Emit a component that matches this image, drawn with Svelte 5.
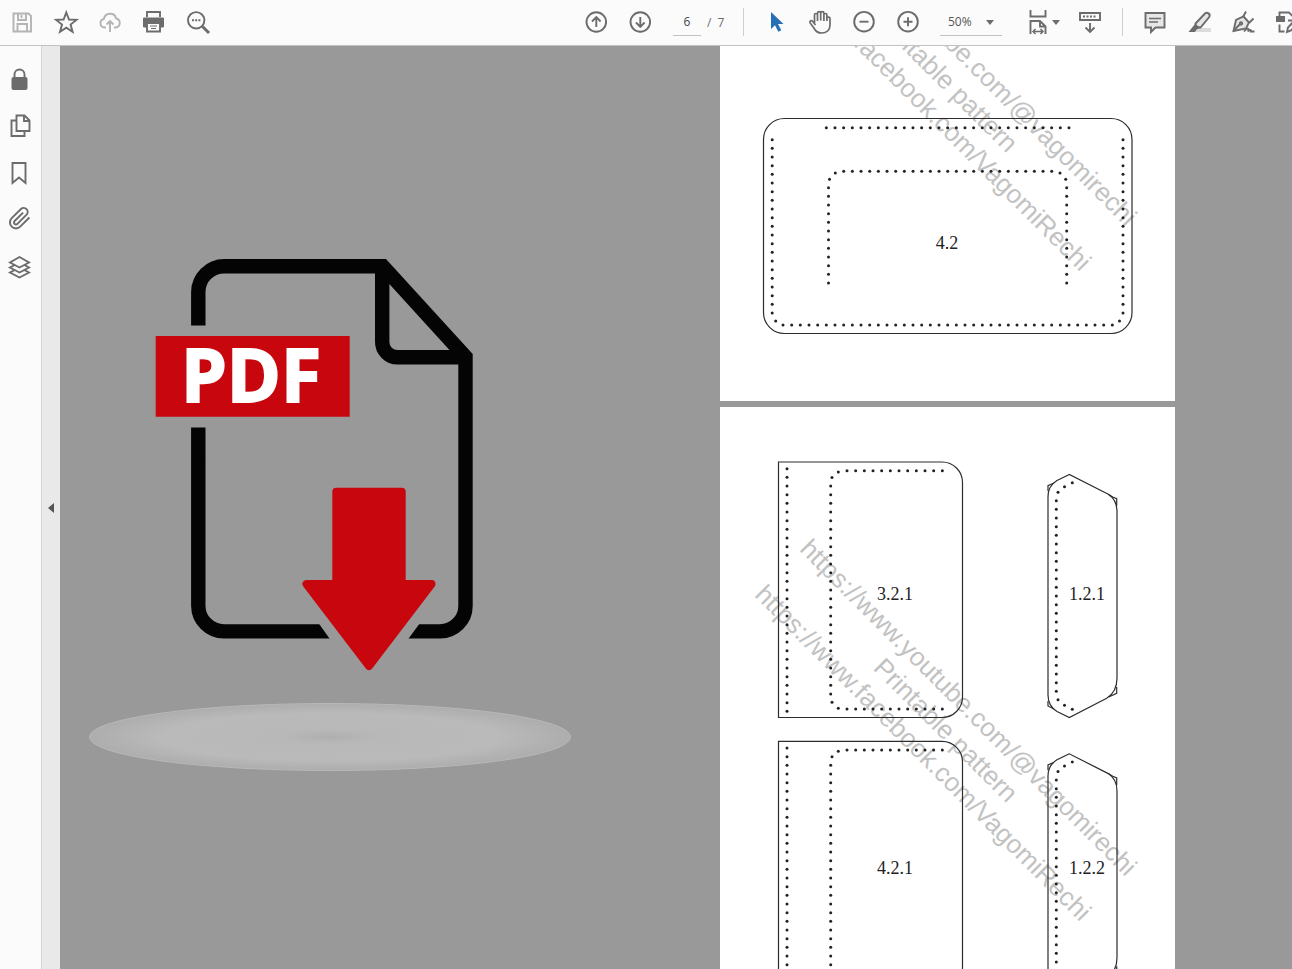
<script>
  // icon bodies, drawn on a 24 x 24 grid with stroke = currentColor
  const icons = {
    save: '<path d="M3.5 3.5h15L21 6v15.500H3.500z"/><path d="M8 3.500v6.500h8v-6.500M7.500 21.500v-7.500h9.500v7.500"/><path d="M11.500 5v3"/>',
    star: '<path d="M12.300 2.500l2.700 7 7.500.4-5.900 4.700 2 7.300-6.300-4.200-6.300 4.200 2-7.300-5.900-4.700 7.500-.4z"/>',
    cloud: '<path d="M8 17.500H6.500a4.300 4.300 0 0 1-.6-8.500 6.300 6.300 0 0 1 12.300-.5 4.600 4.600 0 0 1-.2 9H16"/><path d="M12 22V11.500M8.500 14.500l3.500-3.500 3.500 3.500"/>',
    print: '<path d="M5 7V2h13v5"/><path d="M1.500 8h20v9h-3v-4h-14v4h-3z" fill="currentColor" stroke-width="1"/><path d="M5 13h13v8.500H5z" fill="#fbfbfb"/><path d="M8 16h7M9 18.500h5" stroke-width="1"/>',
    search: '<circle cx="10.200" cy="10.300" r="8.200"/><path d="M16.200 16.300l6.800 6.700" stroke-width="3"/><path d="M6 10.300h8.500" stroke-dasharray="2 1.200"/>',
    up: '<circle cx="12.300" cy="12" r="9.800"/><path d="M12.300 17V7.500M8 11.500l4.300-4.300 4.300 4.300"/>',
    down: '<circle cx="12.300" cy="12" r="9.800"/><path d="M12.300 7v9.500M8 12.500l4.300 4.300 4.300-4.300"/>',
    select: '<path d="M7 2v17l4-3.700 3.300 6.500 3-1.500-3.300-6.200h5.500z" fill="#2670b8" stroke="none"/>',
    hand: '<path d="M6.500 13V5c0-2 3-2 3 0v6M9.500 10V3.200c0-2 3.200-2 3.200 0V10.500M12.700 10V3.200c0-2 3.200-2 3.200 0V11M15.900 10.500V5c0-2 3-2 3 0v6M18.900 9.500V8.500c0-2 3.100-1.800 3.100 0v6.500c0 5-3.500 8-8.300 8-4 0-6-1.500-7.500-4.500L2 12.700c-.7-1.900 1.400-2.800 2.600-1.400L7.500 15" stroke-width="1.700"/>',
    minus: '<circle cx="12" cy="11.700" r="9.800"/><path d="M7.500 11.700h9"/>',
    plus: '<circle cx="12" cy="11.700" r="9.800"/><path d="M7.500 11.700h9M12 7.200v9"/>',
    scroll: '<path d="M2 3h20v7H2z"/><path d="M5 6.500h14" stroke-dasharray="2 1.500"/><path d="M12 13v9M7.500 17.500L12 22l4.500-4.500"/>',
    comment: '<path d="M2.500 3h19v14.500h-9L8 22v-4.500H2.500z" fill="#e6e6e6"/><path d="M6 8.500h12M6 12h9" stroke-width="1.500"/>',
    highlight: '<path d="M9 18h15v4H4z" fill="#dcdcdc" stroke="none"/><path d="M8.500 13.500l9.500-10c2-2 6 .5 4.200 3.500l-8.700 10.500c-3 0-5-1.500-5-4z" fill="#e6e6e6"/><path d="M8 14l5 4-3.500 1.500L8 22H1.500z" fill="currentColor" stroke="none"/>',
    sign: '<path d="M2.500 21L5 10l7.500-3.500 5.500 6-3 6z" fill="#e6e6e6"/><path d="M12 7l3-5.500M18 13l4.500-4.500M2.500 21l6.500-7"/><path d="M13 21.500c4-5 5-2.500 4 0 2-2.500 3.500-1.500 3 0h3.500"/><circle cx="10" cy="13.500" r="1.200"/>',
    share: '<path d="M4.500 7.500V2.500H14l5 5v3h-6"/><path d="M1 6h9v6H1z" fill="currentColor" stroke="none"/><path d="M4.500 14.500v7h5M12 22l1-4.500L21 9l3 3-8 8.500z"/>',
    lock: '<path d="M6.500 11V7.500a5 5 0 0 1 10 0V11"/><rect x="3.500" y="10" width="16" height="13" rx="2" fill="currentColor" stroke="none"/>',
    pages: '<path d="M8.500 1.500h8l5 5V17h-13z"/><path d="M16 2v5h5.500M8 6.500H3.500V22h13v-4.500"/>',
    bookmark: '<path d="M4.500 2h13v20L11 16.500 4.500 22z"/>',
    clip: '<path d="M21.400 9.500l-9.200 9.200a6 6 0 0 1-8.500-8.500L13 1a4 4 0 0 1 5.600 5.700l-9.200 9.200a2 2 0 0 1-2.800-2.900l8.500-8.400"/>',
    layers: '<path d="M11.500 12.500L2 17.500l9.500 5 9.500-5z"/><path d="M11.500 7.500L2 12.500l9.500 5 9.500-5z" fill="#fbfbfb"/><path d="M11.500 2L2 7.500l9.500 5 9.500-5z" fill="#fbfbfb"/>'
  };

  const fileTools = [
    { id: 'save', label: 'Save', off: true },
    { id: 'star', label: 'Add to favourites' },
    { id: 'cloud', label: 'Upload', off: true },
    { id: 'print', label: 'Print' },
    { id: 'search', label: 'Find' }
  ];
  const panels = [
    { id: 'lock', label: 'Security' },
    { id: 'pages', label: 'Page thumbnails' },
    { id: 'bookmark', label: 'Bookmarks' },
    { id: 'clip', label: 'Attachments' },
    { id: 'layers', label: 'Layers' }
  ];
  const pageTools = [{ id: 'up', label: 'Previous page' }, { id: 'down', label: 'Next page' }];
  const viewTools = [
    { id: 'select', label: 'Select' },
    { id: 'hand', label: 'Pan' },
    { id: 'minus', label: 'Zoom out' },
    { id: 'plus', label: 'Zoom in' }
  ];
  const markTools = [
    { id: 'comment', label: 'Comment' },
    { id: 'highlight', label: 'Highlight' },
    { id: 'sign', label: 'Sign' },
    { id: 'share', label: 'More tools' }
  ];

  let page = $state('6');
  let zoom = $state('50%');

  // stitching holes sit 26/3 units apart on the pattern
  const STEP = 26 / 3;
  const row = (x, y, n) => Array.from({ length: n }, (_, i) => [x + i * STEP, y]);
  const col = (x, y, n) => Array.from({ length: n }, (_, i) => [x, y + i * STEP]);

  const coverHoles = [
    ...row(106.3, 370.7, 29),
    ...col(52.2, 382.7, 21),
    ...col(403, 382.7, 21),
    ...row(63, 568, 39),
    [55.7, 564], [399.5, 564],
    ...row(123.7, 414.3, 25),
    [115.3, 416], [109.5, 422.3], [340, 416], [345.7, 422.3],
    ...col(108.5, 430.7, 12),
    ...col(346.7, 430.7, 12)
  ];
  const pocketHoles = [
    ...col(67, 61.7, 29),
    ...row(127, 63.7, 12),
    [118.3, 65], [112, 70.5],
    ...col(110.7, 79, 25),
    [112, 295.3], [118.3, 301.3],
    ...row(127, 302, 12)
  ];
  const strapHoles = [
    [352.3, 75.7], [344.5, 79.7], [338, 85.3],
    ...col(336.3, 93.7, 23),
    [338, 292.7], [344.5, 298.3], [352.3, 302.3]
  ];
</script>

{#snippet tool(t)}
  <button class="tool" class:off={t.off} aria-label={t.label}>
    <svg class="icon" viewBox="0 0 24 24">{@html icons[t.id]}</svg>
  </button>
{/snippet}

{#snippet holes(list)}
  {#each list as [x, y]}
    <circle class="hole" cx={x} cy={y} r="1.5" />
  {/each}
{/snippet}

{#snippet watermark()}
  <g class="mark" transform="translate(226 323) rotate(45)">
    <text y="-23">https://www.youtube.com/@vagomirechi</text>
    <text y="9">Printable pattern</text>
    <text y="41">https://www.facebook.com/VagomiRechi</text>
  </g>
{/snippet}

{#snippet pieces()}
  <path class="cut" d="M58.5 55H222a20.500 20.500 0 0 1 20.500 20.500V290a20.500 20.500 0 0 1-20.500 20.500H58.500z" />
  {@render holes(pocketHoles)}
  <path class="cut" d="M349.300 67.500L337 73.500Q328 79 328 89.700V288Q328 299 337 304.500L349.300 310.500L386.700 291.300Q397 285 397 271.300V104.700Q397 93 388.300 87.300z" />
  <path class="cut" d="M328 84v-5.300l6-2.700M388.300 87.300l4.400 2.700 4 1.700V99M328 294v5l6 3M396.700 280v6.300l-8 3.700" />
  {@render holes(strapHoles)}
{/snippet}

<div class="app">
  <header class="toolbar">
    <div class="group file">
      {#each fileTools as t}{@render tool(t)}{/each}
    </div>
    <div class="group main">
      {#each pageTools as t}{@render tool(t)}{/each}
      <div class="pager">
        <input aria-label="Page number" bind:value={page} />
        <span>/</span>
        <span>7</span>
      </div>
      <span class="sep first"></span>
      {#each viewTools as t}{@render tool(t)}{/each}
      <label class="zoom">
        <select aria-label="Zoom level" bind:value={zoom}>
          <option>50%</option>
          <option>75%</option>
          <option>100%</option>
        </select>
        <svg class="caret" viewBox="0 0 8 5"><path d="M0 0h8L4 5z" /></svg>
      </label>
      <button class="tool fit" aria-label="Fit width">
        <svg class="icon" viewBox="0 0 24 24">
          <path d="M4.500 0v6.500h15V0M4.500 24V11H14l5.500 5.500V24M14 11v5.500h5.500" />
          <path d="M7 21.500h10M9.500 19L7 21.500 9.500 24M14.500 19l2.500 2.500-2.500 2.500" stroke-width="1.500" />
        </svg>
        <svg class="caret" viewBox="0 0 8 5"><path d="M0 0h8L4 5z" /></svg>
      </button>
      {@render tool({ id: 'scroll', label: 'Scrolling' })}
      <span class="sep"></span>
      {#each markTools as t}{@render tool(t)}{/each}
    </div>
  </header>

  <div class="body">
    <nav class="side">
      {#each panels as t}{@render tool(t)}{/each}
    </nav>
    <button class="collapse" aria-label="Toggle panel">
      <svg viewBox="0 0 6 10"><path d="M6 0v10L0 5z" /></svg>
    </button>

    <main class="canvas">
      <div class="art">
        <svg viewBox="88 258 484 514">
          <defs>
            <radialGradient id="disc">
              <stop offset="0" stop-color="#afafaf" />
              <stop offset="0.2" stop-color="#b8b8b8" />
              <stop offset="0.7" stop-color="#bababa" />
              <stop offset="1" stop-color="#adadad" />
            </radialGradient>
          </defs>
          <ellipse cx="330" cy="737" rx="240.500" ry="33.500" fill="url(#disc)" stroke="#b8b8b8" />
          <path class="sheet" d="M198.300 325.500V292a26 26 0 0 1 26-25.800H382.800L465.500 356.800V606a25.500 25.500 0 0 1-25.500 25.400H224a25.700 25.700 0 0 1-25.700-25.400V427.500" />
          <path class="sheet" d="M382.200 267V342a15.300 15.300 0 0 0 15.300 15.300H465" />
          <path class="gap" d="M318.500 623h101.500l-12.500 17h-77z" />
          <path class="red" d="M155.700 336h194v80.700h-194z" />
          <path class="red arrow" d="M336.300 491.700h65.400V584H431.500L369 666l-62.500-82h29.800z" />
          <text class="pdf" x="251" y="402">PDF</text>
        </svg>
      </div>

      <div class="pages">
        <svg class="page" viewBox="0 289 455 355">
          {@render watermark()}
          <rect class="cut" x="43.500" y="361.500" width="368.500" height="215" rx="21" />
          {@render holes(coverHoles)}
          <text class="label" x="227" y="492">4.2</text>
        </svg>
        <svg class="page" viewBox="0 0 455 644">
          {@render watermark()}
          {@render pieces()}
          <g transform="translate(0 279.300)">{@render pieces()}</g>
          <text class="label" x="175" y="193">3.2.1</text>
          <text class="label" x="367" y="193">1.2.1</text>
          <text class="label" x="175" y="467">4.2.1</text>
          <text class="label" x="367" y="467">1.2.2</text>
        </svg>
      </div>
    </main>
  </div>
</div>

<style>
  :global(body) { margin: 0; }
  .app {
    display: flex;
    flex-direction: column;
    height: 100vh;
    overflow: hidden;
    background: #fbfbfb;
    color: #6c6c6c;
    font-family: "Open Sans", "Noto Sans", sans-serif;
    font-size: 12px;
  }
  button, input, select {
    font: inherit;
    color: inherit;
    background: none;
    border: 0;
    border-radius: 0;
    padding: 0;
    margin: 0;
  }

  .toolbar {
    display: flex;
    flex: none;
    height: 45px;
    border-bottom: 1px solid #c2c2c2;
  }
  .group { display: flex; align-items: center; height: 44px; }
  .file { flex: 1; }
  /* the last button runs past the window edge */
  .main { flex: none; margin-right: -17px; }
  .tool {
    display: flex;
    flex: none;
    align-items: center;
    justify-content: center;
    width: 44px;
    height: 44px;
  }
  .tool.off { color: #b4b4b4; }
  .icon {
    width: 24px;
    height: 24px;
    overflow: visible;
    fill: none;
    stroke: currentColor;
    stroke-width: 1.9;
  }
  .caret { width: 8px; height: 5px; fill: currentColor; }
  .fit { width: 50px; gap: 2px; }
  .sep {
    width: 1px;
    height: 28px;
    margin: 0 10px;
    background: #cfcfcf;
  }
  .sep.first { margin-left: 15px; }

  .pager {
    display: flex;
    align-items: center;
    gap: 6px;
    width: 55px;
    padding-left: 11px;
  }
  .pager input {
    flex: none;
    width: 28px;
    height: 28px;
    box-sizing: border-box;
    border-bottom: 1px solid #c2c2c2;
    text-align: center;
    color: #444;
  }
  .zoom {
    display: grid;
    align-items: center;
    width: 62px;
    margin: 0 16px 0 10px;
  }
  .zoom select, .zoom .caret { grid-area: 1 / 1; }
  .zoom select {
    appearance: none;
    height: 28px;
    padding-left: 8px;
    border-bottom: 1px solid #c2c2c2;
    color: #555;
  }
  .zoom .caret { justify-self: end; margin-right: 8px; pointer-events: none; }

  .body { display: flex; flex: 1; min-height: 0; }
  .side {
    flex: none;
    width: 41px;
    padding-top: 9px;
  }
  .side .tool { width: 40px; height: 47px; }
  .collapse {
    display: flex;
    flex: none;
    align-items: center;
    justify-content: center;
    width: 19px;
    background: #e9e9e9;
    border-left: 1px solid #d4d4d4;
  }
  .collapse svg { width: 6px; height: 10px; fill: #555; }

  .canvas {
    display: flex;
    flex: 1;
    min-width: 0;
    background: #999;
    overflow: hidden;
  }
  .art { flex: 1; padding: 212px 0 0 28px; }
  .art svg { display: block; width: 484px; height: 514px; }
  .sheet { fill: none; stroke: #040404; stroke-width: 14.4; }
  .gap { fill: #999; }
  .red { fill: #c8060e; }
  .arrow { stroke: #c8060e; stroke-width: 8; stroke-linejoin: round; }
  .pdf {
    font-size: 73px;
    font-weight: 700;
    fill: #fff;
    stroke: #fff;
    stroke-width: 2;
    text-anchor: middle;
  }

  .pages {
    display: flex;
    flex: none;
    flex-direction: column;
    gap: 6px;
    width: 455px;
    margin-right: 117px;
  }
  .page { display: block; flex: none; width: 100%; background: #fff; }
  .cut { fill: none; stroke: #2c2c2c; stroke-width: 1.2; }
  .hole { fill: #222; }
  .label {
    font-family: "Liberation Serif", serif;
    font-size: 18px;
    fill: #222;
    text-anchor: middle;
  }
  .mark {
    font-family: "Liberation Sans", sans-serif;
    font-size: 26px;
    fill: #c2c2c2;
    text-anchor: middle;
  }
</style>
